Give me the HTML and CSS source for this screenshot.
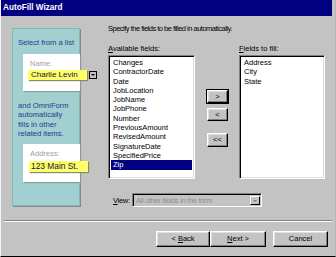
FILE: index.html
```html
<!DOCTYPE html>
<html lang="en">

<head>
    <meta charset="utf-8">
    <title>AutoFill Wizard</title>
    <link rel="stylesheet" href="styles.css">
</head>

<body>
    <div class="window">
        <div class="titlebar">AutoFill Wizard</div>

        <div class="content">
            <div class="side">
                <div class="side-text">Select from a list</div>
                <div class="sample">
                    <div class="sample-label">Name:</div>
                    <div class="sample-row">
                        <div class="yellow-field">Charlie Levin</div>
                        <div class="mini-drop"><span class="tri"></span></div>
                    </div>
                </div>
                <div class="side-text side-para">and OmniForm automatically fills in other related items.</div>
                <div class="sample sample-addr">
                    <div class="sample-label">Address:</div>
                    <div class="sample-row">
                        <div class="yellow-field addr">123 Main St.</div>
                    </div>
                </div>
            </div>

            <div class="main">
                <div class="intro">Specify the fields to be filled in automatically.</div>

                <div class="lists">
                    <div class="list-col">
                        <div class="label"><u>A</u>vailable fields:</div>
                        <div class="listbox left-list">
                            <div class="item">Changes</div>
                            <div class="item">ContractorDate</div>
                            <div class="item">Date</div>
                            <div class="item">JobLocation</div>
                            <div class="item">JobName</div>
                            <div class="item">JobPhone</div>
                            <div class="item">Number</div>
                            <div class="item">PreviousAmount</div>
                            <div class="item">RevisedAmount</div>
                            <div class="item">SignatureDate</div>
                            <div class="item">SpecifiedPrice</div>
                            <div class="item selected">Zip</div>
                        </div>
                    </div>

                    <div class="move-btns">
                        <div class="btn small default">&gt;</div>
                        <div class="btn small">&lt;</div>
                        <div class="btn small far">&lt;&lt;</div>
                    </div>

                    <div class="list-col">
                        <div class="label"><u>F</u>ields to fill:</div>
                        <div class="listbox right-list">
                            <div class="item">Address</div>
                            <div class="item">City</div>
                            <div class="item">State</div>
                        </div>
                    </div>
                </div>

                <div class="view-row">
                    <div class="view-label"><u>V</u>iew:</div>
                    <div class="combo">
                        <div class="combo-text">All other fields in the form</div>
                        <div class="combo-btn"><span class="tri dim"></span></div>
                    </div>
                </div>
            </div>
        </div>

        <div class="separator"></div>

        <div class="footer">
            <div class="btn wide">&lt; <u>B</u>ack</div>
            <div class="btn wide next"><u>N</u>ext &gt;</div>
            <div class="btn wide cancel">Cancel</div>
        </div>
    </div>
</body>

</html>
```

FILE: styles.css
```css
* {
    box-sizing: border-box;
}

body {
    margin: 0px;
    font-family: 'Liberation Sans', Arial, sans-serif;
    font-size: 7.5px;
    color: #000;
}

.window {
    width: 336px;
    height: 257px;
    background-color: #c3c3c3;
    border-left: 1px solid #f4f4f4;
    border-right: 1px solid #b8b8b8;
    border-bottom: 1px solid #000;
}

.titlebar {
    height: 16px;
    margin-right: 3px;
    background-color: #000080;
    color: #fff;
    font-weight: bold;
    font-size: 8.2px;
    line-height: 16px;
    padding-left: 2px;
}

.content {
    display: flex;
    height: 204px;
}

/* teal help panel on the left */
.side {
    width: 68px;
    height: 178px;
    margin: 12px 0px 0px 11px;
    background-color: #a2d0d0;
    border: 1px solid #86b6b6;
    box-shadow: 1px 1px 0px #7c8c8c;
    padding-top: 9px;
}

.side-text {
    color: #1e3c8c;
    font-size: 7.6px;
    line-height: 9.5px;
    padding-left: 5px;
}

.side-para {
    margin-top: 10px;
    padding-right: 4px;
}

.sample {
    width: 57px;
    height: 37px;
    margin: 6px 0px 0px 10px;
    background-color: #fff;
    box-shadow: 1px 1px 1px #8a9a9a;
    padding-top: 5px;
}

.sample-addr {
    height: 38px;
    margin-top: 5px;
}

.sample-label {
    color: #a0a0a0;
    line-height: 9px;
    padding-left: 7px;
}

.sample-row {
    display: flex;
    align-items: center;
    width: 75px;
    margin: 2px 0px 0px 5px;
}

.yellow-field {
    width: 59px;
    height: 10px;
    line-height: 10px;
    background-color: #ffff6a;
    color: #101040;
    font-size: 8px;
    padding-left: 3px;
    box-shadow: 1px 1px 1px #8a8a6a;
}

.yellow-field.addr {
    height: 11px;
    line-height: 11px;
    width: 59px;
    margin-top: 1px;
    margin-left: 1px;
    padding-left: 2px;
    font-size: 8.4px;
}

.mini-drop {
    width: 8px;
    height: 8px;
    margin-left: 2px;
    background-color: #c0c0c0;
    border: 1px solid #000;
    display: flex;
    align-items: center;
    justify-content: center;
}

.tri {
    width: 0px;
    height: 0px;
    border-left: 2px solid transparent;
    border-right: 2px solid transparent;
    border-top: 2px solid #000;
}

.tri.dim {
    border-top-color: #808080;
}

/* right side: field pickers */
.main {
    margin-left: 28px;
    width: 217px;
    padding-top: 8px;
}

.intro {
    line-height: 9px;
    letter-spacing: -0.5px;
    white-space: nowrap;
}

.lists {
    display: flex;
    margin-top: 11px;
}

.label {
    line-height: 9px;
    margin-bottom: 2px;
}

.listbox {
    height: 124px;
    background-color: #fff;
    border: 1px solid;
    border-color: #808080 #fff #fff #808080;
    box-shadow: inset 1px 1px 0px #000, inset -1px -1px 0px #dfdfdf;
    padding: 2px 2px 0px 2px;
}

.left-list {
    width: 87px;
}

.right-list {
    width: 86px;
}

.item {
    height: 9.3px;
    line-height: 9.3px;
    padding-left: 2px;
    white-space: nowrap;
}

.item.selected {
    background-color: #000080;
    color: #fff;
}

.move-btns {
    display: flex;
    flex-direction: column;
    width: 21px;
    margin: 0px 11px 0px 12px;
    padding-top: 46px;
}

.btn {
    background-color: #c3c3c3;
    border: 1px solid;
    border-color: #fff #000 #000 #fff;
    box-shadow: inset -1px -1px 0px #808080, inset 1px 1px 0px #dfdfdf;
    text-align: center;
}

.btn.small {
    height: 13px;
    line-height: 11px;
    margin-bottom: 5px;
}

.btn.default {
    outline: 1px solid #000;
}

.btn.far {
    margin-top: 7px;
    height: 14px;
    line-height: 12px;
}

.view-row {
    display: flex;
    align-items: center;
    margin-top: 14px;
}

.view-label {
    flex: none;
    margin-left: 5px;
    width: 19px;
    white-space: nowrap;
    letter-spacing: -0.3px;
}

.combo {
    flex: none;
    display: flex;
    width: 130px;
    height: 14px;
    background-color: #c3c3c3;
    border: 1px solid;
    border-color: #808080 #fff #fff #808080;
    box-shadow: inset 1px 1px 0px #000;
    padding: 2px 1px 1px 2px;
}

.combo-text {
    flex: 1;
    color: #909090;
    line-height: 9px;
    padding-left: 1px;
    white-space: nowrap;
    letter-spacing: -0.3px;
}

.combo-btn {
    width: 10px;
    background-color: #c3c3c3;
    border: 1px solid;
    border-color: #fff #000 #000 #fff;
    display: flex;
    align-items: center;
    justify-content: center;
}

.separator {
    margin: 0px 3px;
    height: 2px;
    border-top: 1px solid #808080;
    border-bottom: 1px solid #fff;
}

.footer {
    display: flex;
    justify-content: flex-end;
    padding-right: 7px;
    margin-top: 9px;
}

.btn.wide {
    height: 16px;
    line-height: 14px;
    width: 54px;
}

.btn.next {
    width: 56px;
}

.btn.cancel {
    width: 55px;
    margin-left: 7px;
}
```
